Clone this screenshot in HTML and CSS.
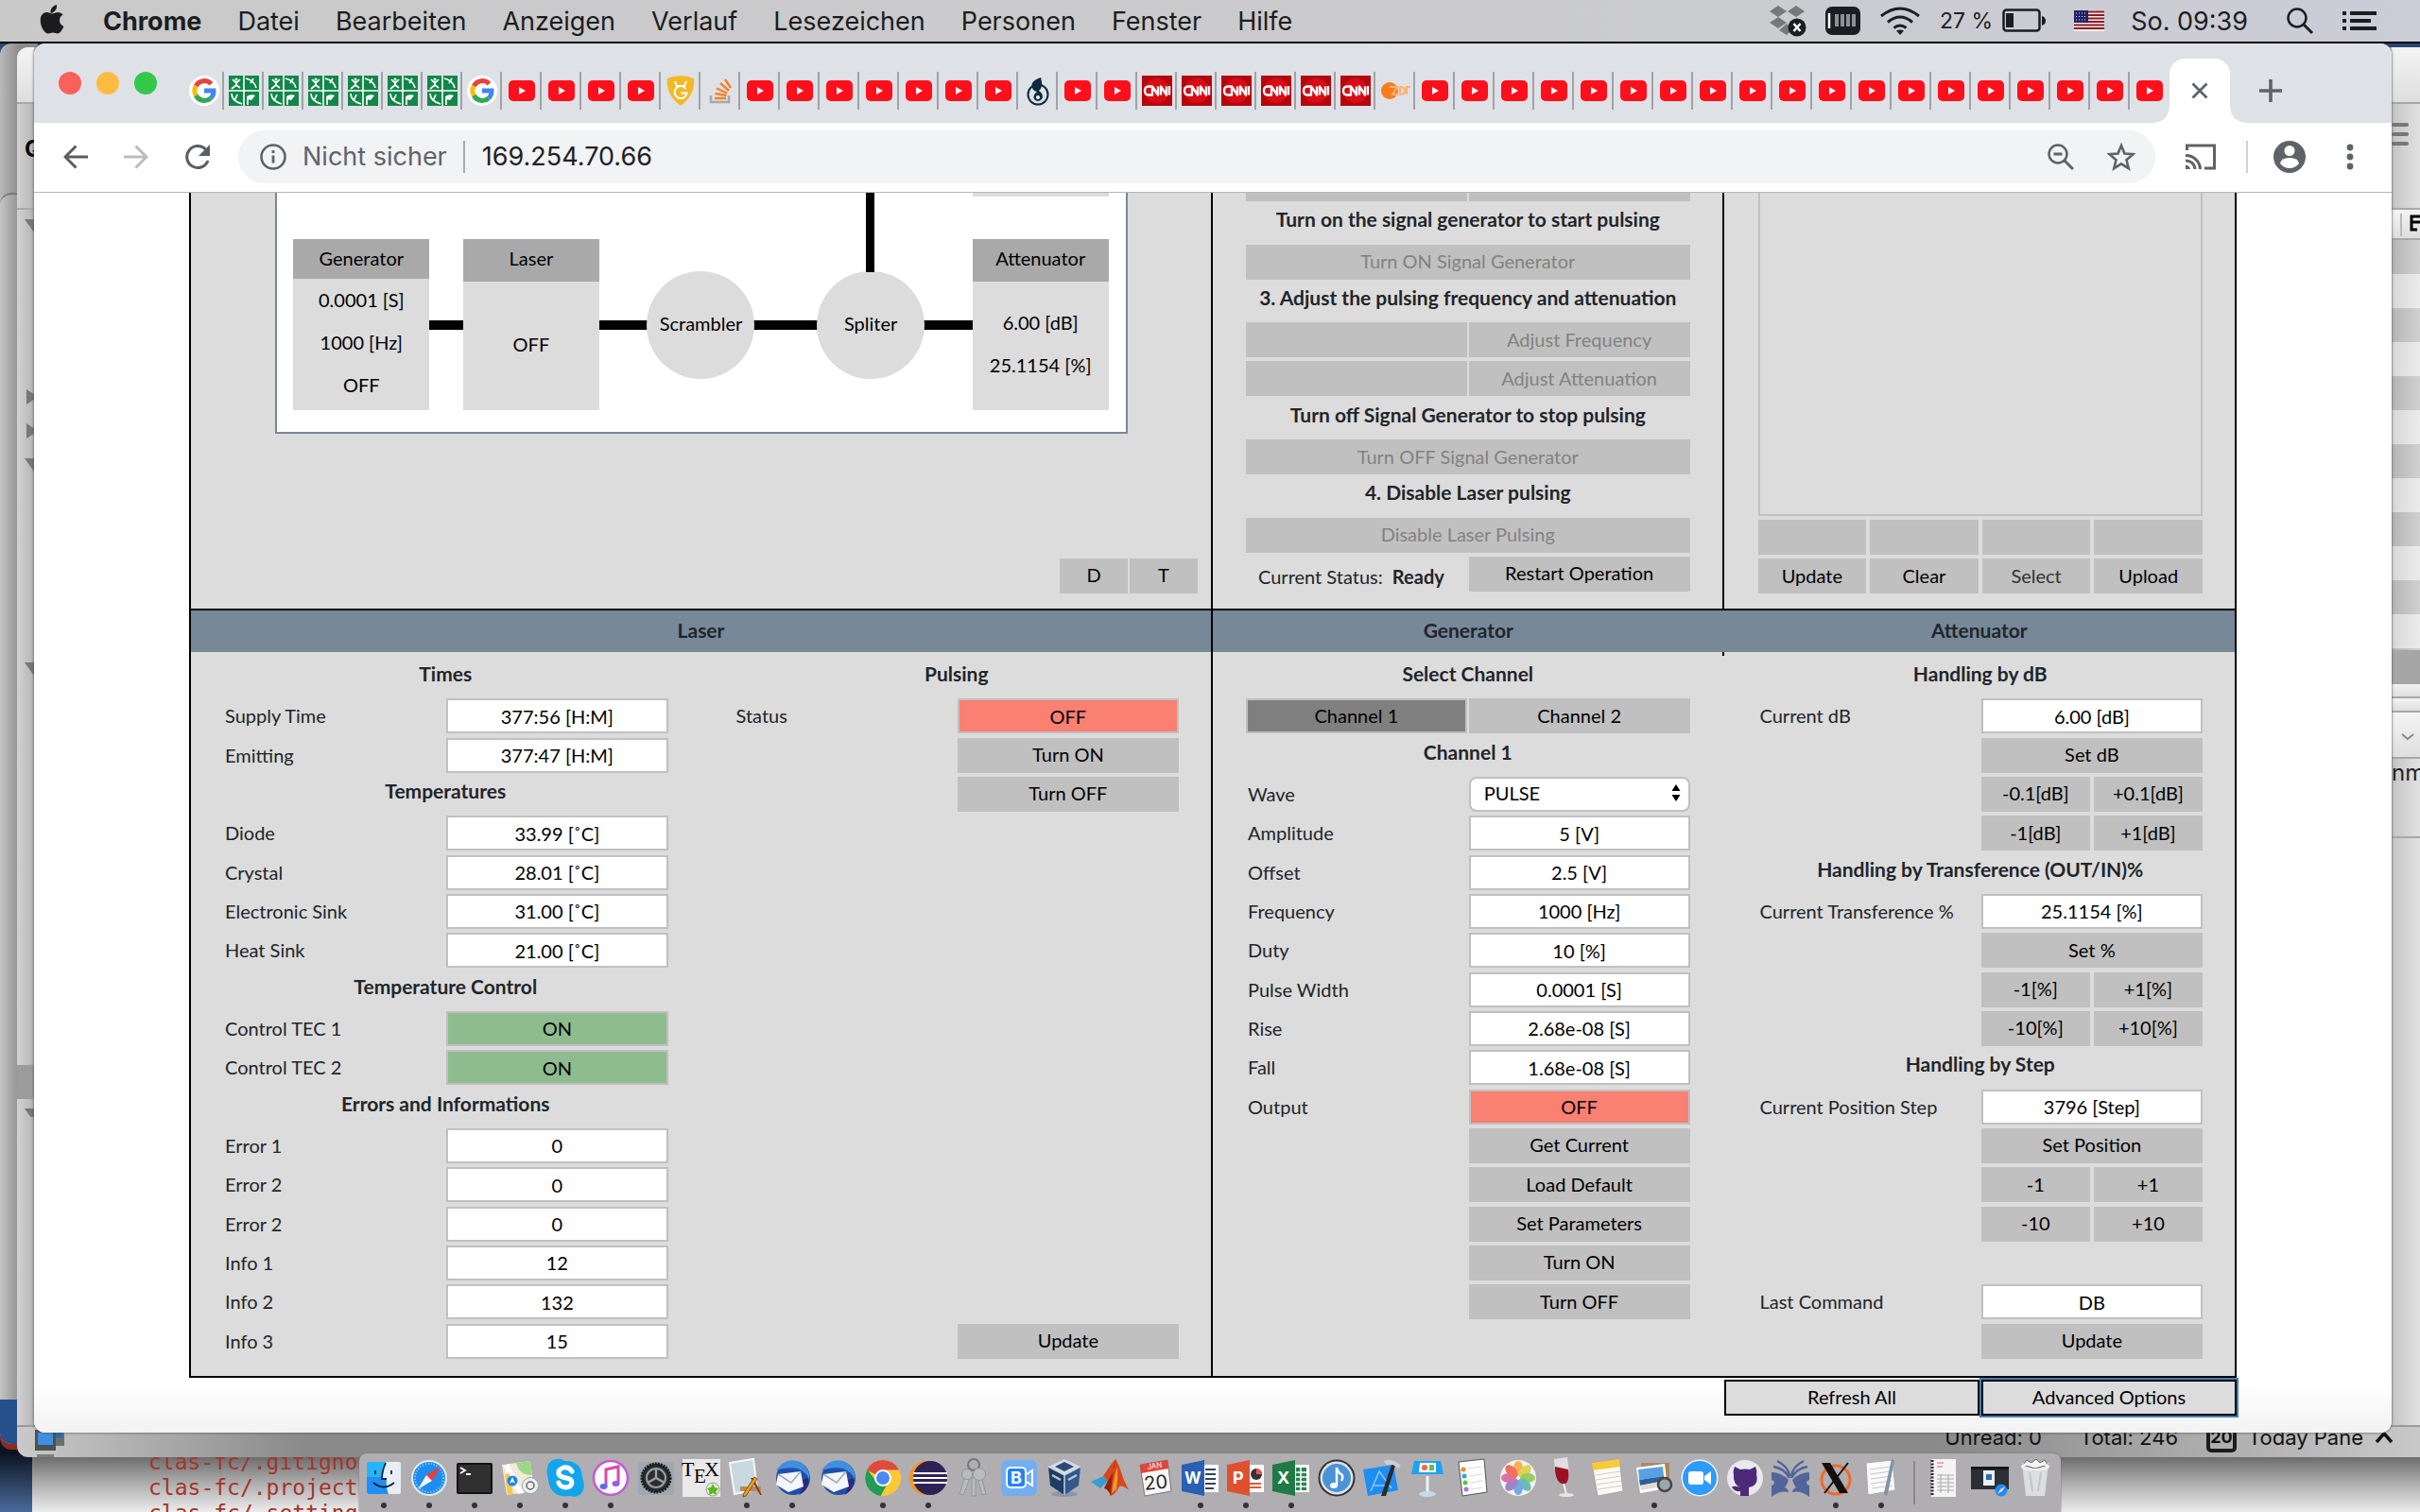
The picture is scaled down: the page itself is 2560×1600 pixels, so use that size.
FILE: index.html
```html
<!DOCTYPE html>
<html lang="de">
<head>
<meta charset="utf-8">
<title>169.254.70.66</title>
<link rel="stylesheet" href="styles.css">
</head>
<body>
<svg class="sprite" aria-hidden="true">
  <symbol id="yt" viewBox="0 0 32 32"><rect x="2" y="5" width="28" height="22" rx="5" fill="#ff0f1b"/><path d="M13 12l7 4-7 4z" fill="#fff"/></symbol>
  <symbol id="goo" viewBox="0 0 32 32"><circle cx="16" cy="16" r="16" fill="#fff"/><g fill="none" stroke-width="5"><path d="M23.500 8.800A10 10 0 0 0 7.300 11" stroke="#ea4335"/><path d="M7.300 11a10 10 0 0 0 0 10" stroke="#fbbc05"/><path d="M7.300 21a10 10 0 0 0 15.500 3" stroke="#34a853"/><path d="M22.800 24a10 10 0 0 0 3.200-8h-10" stroke="#4285f4"/></g></symbol>
  <symbol id="geo" viewBox="0 0 32 32"><path d="M0 0h32v32H0z" fill="#12864a"/><path d="M16 0v32M0 16h32" stroke="#fff" stroke-width="1.600"/><g stroke="#fff" stroke-width="1.700" fill="none"><path d="M4 4l4 4 4-4M8 6v4l-5 4M8 10l4 3M18 3q9 2 11 10M26 3l-3 5M3 19q0 8 11 11M9 20l-3 7M20 31v-8"/></g><path d="M19 22q4-3 9-1l-4 5-4-1z" fill="#fff"/><circle cx="8" cy="4" r="1.500" fill="#fff"/></symbol>
  <symbol id="gold" viewBox="0 0 32 32"><path d="M2 3q14-6 28 0 2 17-14 29Q0 20 2 3z" fill="#f2b927"/><path d="M10 6l2 5h8l2-5M21.500 14a6.500 6.500 0 1 0 1 4.500h-6" stroke="#fff" stroke-width="2" fill="none"/></symbol>
  <symbol id="so" viewBox="0 0 32 32"><path d="M6 21v7h19v-7" fill="none" stroke="#a6a9ac" stroke-width="2.600"/><path d="M10 24h12M10.500 19l12 2M12 13.500l11 5M16 8l9 8M21 4l6 9" stroke="#f48024" stroke-width="2.400"/></symbol>
  <symbol id="opo" viewBox="0 0 32 32"><circle cx="16" cy="20" r="10.500" fill="none" stroke="#0d2b40" stroke-width="2"/><path d="M19 2q-12 4-9 11 1 3 5 4-5 4-3 8 4 4 8 0 3-5-3-9 5-4 2-14z" fill="#0d2b40"/><circle cx="16" cy="23" r="2" fill="#fff"/></symbol>
  <symbol id="cnn" viewBox="0 0 32 32"><path d="M0 0h32v32H0z" fill="#b5060d"/><circle cx="16" cy="16" r="13" fill="#d90b16"/><g fill="none" stroke="#fff" stroke-width="2.400" stroke-linejoin="round"><path d="M10 11.500H7q-4 0-4 4.500t4 4.500h4v-9l6 9v-9M20 20.500v-9l6 9v-9M29 11v9.500"/></g></symbol>
  <symbol id="zdf" viewBox="0 0 32 32"><circle cx="10" cy="16" r="9" fill="#fa7d19"/><path d="M10 12h8l-5 8h6M21 12v8q5 0 5-4t-5-4M28 20v-8h4" fill="none" stroke="#ffb070" stroke-width="2.200"/></symbol>
  <symbol id="bird" viewBox="0 0 40 40"><circle cx="21" cy="20" r="18" fill="#1f4fa8"/><path d="M3 12Q14-4 30 4q10 8 8 18-2-8-12-12-12-2-23 2z" fill="#3f8fe0"/><path d="M37 20q2 12-10 18 6-8 4-16z" fill="#2b2a7c"/><path d="M5 16l24-3 3 16-16 6-13-8z" fill="#f4f6fa"/><path d="M5 16l14 9 10-12" fill="none" stroke="#9aa7bd" stroke-width="1.500"/></symbol>
</svg>

<header class="menubar">
  <svg class="apple" viewBox="0 0 26 32"><path fill="#1c1c1e" d="M18 1q.5 4-2 6.500T11.500 10Q11 6 13.500 3.500T18 1zM24.500 11.500q-3.500 2-3.500 6t4.500 6.500Q22 31.500 19 31.500c-2 0-2.800-1-5-1s-3 1-5 1C5 31.500.7 24 .7 17.500.7 12 4 9 7.500 9c2.300 0 4 1.400 5.500 1.400S17 9 19.500 9q3.300 0 5 2.500z"/></svg>
  <nav class="menus">
    <button class="app">Chrome</button><button>Datei</button><button>Bearbeiten</button><button>Anzeigen</button><button>Verlauf</button><button>Lesezeichen</button><button>Personen</button><button>Fenster</button><button>Hilfe</button>
  </nav>
  <div class="tray">
    <svg width="40" height="34" viewBox="0 0 40 34"><path fill="#77787c" d="M10 1l9 6-9 6-9-6zM29 1l9 6-9 6-9-6zM10 13l9 6-9 6-9-6zM19 20l7 6-7 6-8-5z"/><circle cx="30" cy="24" r="9.500" fill="#1c1d22"/><path d="M26.500 20l7 8M33.500 20l-7 8" stroke="#fff" stroke-width="2.500"/></svg>
    <svg width="37" height="30" viewBox="0 0 37 30"><rect width="37" height="30" rx="7" fill="#1c1d22"/><path d="M4 7v16" stroke="#fff" stroke-width="2.500"/><path d="M12 8v13M18 8v13M24 8v13M30 8v13" stroke="#8e8f94" stroke-width="4"/></svg>
    <svg width="44" height="30" viewBox="0 0 44 30"><g fill="none" stroke="#1c1d22" stroke-width="3"><path d="M2 10q20-16 40 0M9 16.500q13-11 26 0M15.500 22.500q6.500-5 13 0"/></g><path d="M18 25.500q4-2 8 0l-4 4.500z" fill="#1c1d22"/></svg>
    <span class="charge">27 %</span>
    <svg width="46" height="26" viewBox="0 0 46 26"><rect x="1.500" y="1.500" width="38" height="22" rx="3" fill="none" stroke="#1c1d22" stroke-width="2.500"/><rect x="4" y="5" width="8" height="15" fill="#1c1d22"/><path d="M42 8q4 1 4 5t-4 5z" fill="#1c1d22"/></svg>
    <svg class="flag" width="32" height="22" viewBox="0 0 32 22"><path d="M0 0h32v22H0z" fill="#f2eeee"/><path d="M0 1.500h32M0 5h32M0 8.500h32M0 12h32M0 15.500h32M0 19h32" stroke="#8e1a22" stroke-width="1.800"/><path d="M0 0h15v13H0z" fill="#1f2364"/><path d="M2 3h12M2 6.500h12M2 10h12" stroke="#dfe0f0" stroke-width="1" stroke-dasharray="1 2"/></svg>
    <span class="clock">So. 09:39</span>
    <svg class="spot" width="30" height="30" viewBox="0 0 30 30"><circle cx="12" cy="12" r="9.500" fill="none" stroke="#1c1d22" stroke-width="2.500"/><path d="M19 19l9 9" stroke="#1c1d22" stroke-width="3"/></svg>
    <svg width="36" height="22" viewBox="0 0 36 22"><path d="M0 3h4M8 3h28M0 11h4M8 11h22M0 19h4M8 19h28" stroke="#1c1d22" stroke-width="4"/></svg>
  </div>
</header>

<main class="desktop">
  <div class="back-window"></div>
  <div class="back-window lower"></div>
  <div class="terminal"><pre>clas-fc/.gitigno
clas-fc/.project
clas-fc/.setting</pre></div>
  <div class="mail">
    <div class="mail-left"><div class="band"></div><div class="band second"><span>Q</span></div>
      <svg width="18" height="960" viewBox="0 0 18 960"><g fill="#777"><path d="M8 10h20l-10 14zM10 190l12 8-12 8zM10 226l12 8-12 8zM8 263h20l-10 14zM8 479h20l-10 14zM8 951h20l-10 14z"/></g><path d="M0 905h18v36H0z" fill="#9b9b9b"/></svg>
    </div>
    <div class="mail-right"><div class="band"></div><div class="band second"><i></i><i></i><i></i></div><div class="band cols"><svg width="30" height="24" viewBox="0 0 30 24"><path d="M10 0v24" stroke="#bbb" stroke-width="2"/><path d="M30 3H21v14h6M21 9h9" fill="none" stroke="#000" stroke-width="3"/></svg></div>
      <div class="list"></div><div class="picked"></div><div class="band thin"></div><div class="band thin"></div>
      <div class="band chev"><svg width="14" height="8" viewBox="0 0 14 8"><path d="M1 1l6 5 6-5" fill="none" stroke="#888" stroke-width="2"/></svg></div><div class="band nm">nm.</div></div>
    <div class="mail-status">
      <svg class="pc" width="34" height="36" viewBox="0 0 34 36"><path d="M14 0h18v22H14z" fill="#6a706c"/><path d="M16 2h14v12H16z" fill="#2a6bb5"/><path d="M1 5h22v22H1z" fill="#4c524f"/><path d="M4 8h16v13H4z" fill="#3f8fe0"/><path d="M3 31h18v4H3z" fill="#7b827e"/></svg>
      <span class="unread">Unread: 0</span><span>Total: 246</span>
      <span class="today"><b>20</b>Today Pane<svg width="20" height="14" viewBox="0 0 20 14"><path d="M2 12l8-9 8 9" fill="none" stroke="#111" stroke-width="3.500"/></svg></span>
    </div>
  </div>

  <section class="browser">
    <div class="tabstrip">
      <div class="lights"><button aria-label="Schließen"></button><button aria-label="Minimieren"></button><button aria-label="Vergrößern"></button></div>
      <ul class="tabs">
        <li><svg><use href="#goo"/></svg></li><li><svg><use href="#geo"/></svg></li><li><svg><use href="#geo"/></svg></li><li><svg><use href="#geo"/></svg></li><li><svg><use href="#geo"/></svg></li><li><svg><use href="#geo"/></svg></li><li><svg><use href="#geo"/></svg></li><li><svg><use href="#goo"/></svg></li>
        <li><svg><use href="#yt"/></svg></li><li><svg><use href="#yt"/></svg></li><li><svg><use href="#yt"/></svg></li><li><svg><use href="#yt"/></svg></li>
        <li><svg><use href="#gold"/></svg></li><li><svg><use href="#so"/></svg></li>
        <li><svg><use href="#yt"/></svg></li><li><svg><use href="#yt"/></svg></li><li><svg><use href="#yt"/></svg></li><li><svg><use href="#yt"/></svg></li><li><svg><use href="#yt"/></svg></li><li><svg><use href="#yt"/></svg></li><li><svg><use href="#yt"/></svg></li>
        <li><svg><use href="#opo"/></svg></li><li><svg><use href="#yt"/></svg></li><li><svg><use href="#yt"/></svg></li>
        <li><svg><use href="#cnn"/></svg></li><li><svg><use href="#cnn"/></svg></li><li><svg><use href="#cnn"/></svg></li><li><svg><use href="#cnn"/></svg></li><li><svg><use href="#cnn"/></svg></li><li><svg><use href="#cnn"/></svg></li>
        <li><svg><use href="#zdf"/></svg></li>
        <li><svg><use href="#yt"/></svg></li><li><svg><use href="#yt"/></svg></li><li><svg><use href="#yt"/></svg></li><li><svg><use href="#yt"/></svg></li><li><svg><use href="#yt"/></svg></li><li><svg><use href="#yt"/></svg></li><li><svg><use href="#yt"/></svg></li><li><svg><use href="#yt"/></svg></li><li><svg><use href="#yt"/></svg></li><li><svg><use href="#yt"/></svg></li><li><svg><use href="#yt"/></svg></li><li><svg><use href="#yt"/></svg></li><li><svg><use href="#yt"/></svg></li><li><svg><use href="#yt"/></svg></li><li><svg><use href="#yt"/></svg></li><li><svg><use href="#yt"/></svg></li><li><svg><use href="#yt"/></svg></li><li><svg><use href="#yt"/></svg></li><li><svg><use href="#yt"/></svg></li>
      </ul>
      <button class="tab-active" aria-label="Tab schließen"><svg width="18" height="18" viewBox="0 0 18 18"><path d="M1.500 1.500l15 15M16.500 1.500l-15 15" stroke="#5f6368" stroke-width="2.800"/></svg></button>
      <button class="tab-new" aria-label="Neuer Tab"><svg width="24" height="24" viewBox="0 0 24 24"><path d="M12 0v24M0 12h24" stroke="#5f6368" stroke-width="3.600"/></svg></button>
    </div>
    <div class="toolbar">
      <div class="nav">
        <button aria-label="Zurück"><svg width="26" height="26" viewBox="0 0 26 26"><path d="M26 13H2M13.500 1.500L2 13l11.500 11.500" fill="none" stroke="#5a5d62" stroke-width="3"/></svg></button>
        <button aria-label="Vor"><svg width="26" height="26" viewBox="0 0 26 26"><path d="M0 13h24M12.500 1.500L24 13 12.500 24.500" fill="none" stroke="#bbbcbe" stroke-width="3"/></svg></button>
        <button aria-label="Neu laden"><svg width="28" height="28" viewBox="0 0 28 28"><path d="M22.500 6A11.500 11.500 0 1 0 25 18" fill="none" stroke="#5a5d62" stroke-width="3"/><path d="M27 1v12H15z" fill="#5a5d62"/></svg></button>
      </div>
      <div class="omnibox">
        <svg width="28" height="28" viewBox="0 0 28 28"><circle cx="14" cy="14" r="12.500" fill="none" stroke="#5f6368" stroke-width="2.600"/><path d="M14 12.500v8M14 7v3" stroke="#5f6368" stroke-width="2.800"/></svg>
        <label for="url">Nicht sicher</label>
        <input id="url" value="169.254.70.66">
        <svg width="28" height="28" viewBox="0 0 28 28"><circle cx="11" cy="11" r="9.500" fill="none" stroke="#5f6368" stroke-width="2.500"/><path d="M18 18l9 9M6.500 11h9" stroke="#5f6368" stroke-width="3"/></svg>
        <svg width="30" height="30" viewBox="0 0 30 30"><path d="M15 3l3.500 8.500 9 .7-7 6 2.200 9L15 22.400l-7.700 4.800 2.200-9-7-6 9-.7z" fill="none" stroke="#5f6368" stroke-width="2.600"/></svg>
      </div>
      <svg class="cast" width="32" height="28" viewBox="0 0 32 28"><path d="M1.500 7V2h29v24H20" fill="none" stroke="#5f6368" stroke-width="3"/><path d="M0 12.500A15 15 0 0 1 15.500 27M0 18a9.500 9.500 0 0 1 10 9" fill="none" stroke="#5f6368" stroke-width="3"/><path d="M0 22.500q4.500.5 5 4.500H0z" fill="#5f6368"/></svg>
      <svg class="person" width="34" height="34" viewBox="0 0 34 34"><circle cx="17" cy="17" r="17" fill="#5f6368"/><circle cx="17" cy="10.500" r="5.500" fill="#fff"/><path d="M7 24q1-6 10-6t10 6q-4 5-10 5T7 24z" fill="#fff"/></svg>
      <svg class="more" width="8" height="28" viewBox="0 0 8 28"><g fill="#5f6368"><circle cx="4" cy="4" r="3.400"/><circle cx="4" cy="14" r="3.400"/><circle cx="4" cy="24" r="3.400"/></g></svg>
    </div>

    <div class="page">
      <div class="upper">
        <div class="overview">
          <div class="diagram">
            <div class="nodes"><div class="box last"></div></div>
            <div class="nodes linked">
              <div class="box"><h4>Generator</h4><p>0.0001 [S]</p><p>1000 [Hz]</p><p>OFF</p></div>
              <div class="box"><h4>Laser</h4><p>OFF</p></div>
              <div class="disc">Scrambler</div>
              <div class="disc stem">Spliter</div>
              <div class="box"><h4>Attenuator</h4><p>6.00 [dB]</p><p>25.1154 [%]</p></div>
            </div>
          </div>
          <div class="dt"><button class="btn">D</button><button class="btn">T</button></div>
        </div>
        <div class="operate">
          <div class="rows">
            <div class="row"><button class="btn" disabled></button><button class="btn" disabled></button></div>
            <h3>Turn on the signal generator to start pulsing</h3>
            <button class="btn" disabled>Turn ON Signal Generator</button>
            <h3>3. Adjust the pulsing frequency and attenuation</h3>
            <div class="row"><input class="btn" aria-label="Frequency" disabled><button class="btn" disabled>Adjust Frequency</button></div>
            <div class="row"><input class="btn" aria-label="Attenuation" disabled><button class="btn" disabled>Adjust Attenuation</button></div>
            <h3>Turn off Signal Generator to stop pulsing</h3>
            <button class="btn" disabled>Turn OFF Signal Generator</button>
            <h3>4. Disable Laser pulsing</h3>
            <button class="btn" disabled>Disable Laser Pulsing</button>
            <div class="row"><p class="status">Current Status: <b>Ready</b></p><button class="btn">Restart Operation</button></div>
          </div>
        </div>
        <div class="log">
          <textarea aria-label="Log" readonly></textarea>
          <div class="quad"><button class="btn"></button><button class="btn"></button><button class="btn"></button><button class="btn"></button></div>
          <div class="quad"><button class="btn">Update</button><button class="btn">Clear</button><button class="btn soft">Select</button><button class="btn">Upload</button></div>
        </div>
      </div>

      <div class="heads"><h2 class="wide">Laser</h2><h2>Generator</h2><h2>Attenuator</h2></div>

      <div class="lower-panels">
        <div class="rows">
          <h3>Times</h3>
          <div class="row"><label for="st">Supply Time</label><input id="st" readonly value="377:56 [H:M]"></div>
          <div class="row"><label for="em">Emitting</label><input id="em" readonly value="377:47 [H:M]"></div>
          <h3>Temperatures</h3>
          <div class="row"><label for="di">Diode</label><input id="di" readonly value="33.99 [˚C]"></div>
          <div class="row"><label for="cr">Crystal</label><input id="cr" readonly value="28.01 [˚C]"></div>
          <div class="row"><label for="es">Electronic Sink</label><input id="es" readonly value="31.00 [˚C]"></div>
          <div class="row"><label for="hs">Heat Sink</label><input id="hs" readonly value="21.00 [˚C]"></div>
          <h3>Temperature Control</h3>
          <div class="row"><label for="t1">Control TEC 1</label><input id="t1" class="on" readonly value="ON"></div>
          <div class="row"><label for="t2">Control TEC 2</label><input id="t2" class="on" readonly value="ON"></div>
          <h3>Errors and Informations</h3>
          <div class="row"><label for="e1">Error 1</label><input id="e1" readonly value="0"></div>
          <div class="row"><label for="e2">Error 2</label><input id="e2" readonly value="0"></div>
          <div class="row"><label for="e3">Error 2</label><input id="e3" readonly value="0"></div>
          <div class="row"><label for="i1">Info 1</label><input id="i1" readonly value="12"></div>
          <div class="row"><label for="i2">Info 2</label><input id="i2" readonly value="132"></div>
          <div class="row"><label for="i3">Info 3</label><input id="i3" readonly value="15"></div>
        </div>
        <div class="rows">
          <h3>Pulsing</h3>
          <div class="row"><label for="ps">Status</label><input id="ps" class="off" readonly value="OFF"></div>
          <div class="row"><button class="btn solo">Turn ON</button></div>
          <div class="row"><button class="btn solo">Turn OFF</button></div>
          <div class="row last-row"><button class="btn solo">Update</button></div>
        </div>
        <div class="rows ruled">
          <h3>Select Channel</h3>
          <div class="row"><button class="btn chosen">Channel 1</button><button class="btn">Channel 2</button></div>
          <h3>Channel 1</h3>
          <div class="row"><label for="wv">Wave</label><div class="pick"><select id="wv"><option>PULSE</option></select><svg width="10" height="18" viewBox="0 0 10 18"><path d="M5 0l4.500 7h-9zM5 18l4.500-7h-9z"/></svg></div></div>
          <div class="row"><label for="am">Amplitude</label><input id="am" readonly value="5 [V]"></div>
          <div class="row"><label for="of">Offset</label><input id="of" readonly value="2.5 [V]"></div>
          <div class="row"><label for="fr">Frequency</label><input id="fr" readonly value="1000 [Hz]"></div>
          <div class="row"><label for="du">Duty</label><input id="du" readonly value="10 [%]"></div>
          <div class="row"><label for="pw">Pulse Width</label><input id="pw" readonly value="0.0001 [S]"></div>
          <div class="row"><label for="ri">Rise</label><input id="ri" readonly value="2.68e-08 [S]"></div>
          <div class="row"><label for="fa">Fall</label><input id="fa" readonly value="1.68e-08 [S]"></div>
          <div class="row"><label for="ou">Output</label><input id="ou" class="off" readonly value="OFF"></div>
          <div class="row"><button class="btn solo">Get Current</button></div>
          <div class="row"><button class="btn solo">Load Default</button></div>
          <div class="row"><button class="btn solo">Set Parameters</button></div>
          <div class="row"><button class="btn solo">Turn ON</button></div>
          <div class="row"><button class="btn solo">Turn OFF</button></div>
        </div>
        <div class="rows notch">
          <h3>Handling by dB</h3>
          <div class="row"><label for="db">Current dB</label><input id="db" readonly value="6.00 [dB]"></div>
          <div class="row"><button class="btn solo">Set dB</button></div>
          <div class="row"><div class="pair"><button class="btn">-0.1[dB]</button><button class="btn">+0.1[dB]</button></div></div>
          <div class="row"><div class="pair"><button class="btn">-1[dB]</button><button class="btn">+1[dB]</button></div></div>
          <h3>Handling by Transference (OUT/IN)%</h3>
          <div class="row"><label for="tr">Current Transference %</label><input id="tr" readonly value="25.1154 [%]"></div>
          <div class="row"><button class="btn solo">Set %</button></div>
          <div class="row"><div class="pair"><button class="btn">-1[%]</button><button class="btn">+1[%]</button></div></div>
          <div class="row"><div class="pair"><button class="btn">-10[%]</button><button class="btn">+10[%]</button></div></div>
          <h3>Handling by Step</h3>
          <div class="row"><label for="sp">Current Position Step</label><input id="sp" readonly value="3796 [Step]"></div>
          <div class="row"><button class="btn solo">Set Position</button></div>
          <div class="row"><div class="pair"><button class="btn">-1</button><button class="btn">+1</button></div></div>
          <div class="row"><div class="pair"><button class="btn">-10</button><button class="btn">+10</button></div></div>
          <div class="row"></div>
          <div class="row"><label for="lc">Last Command</label><input id="lc" readonly value="DB"></div>
          <div class="row"><button class="btn solo">Update</button></div>
        </div>
      </div>
      <div class="foot"><button>Refresh All</button><button class="focused">Advanced Options</button></div>
    </div>
  </section>

  <ul class="dock">
    <li class="run"><svg viewBox="0 0 40 40"><rect x="2" y="3" width="36" height="34" rx="2" fill="#e9eef5"/><path d="M4 3h18q-4 8-4 18h5q-1 9 2 16H4q-2 0-2-2V5q0-2 2-2z" fill="#1e8ff5"/><path d="M4 3h18q-4 8-4 16H2V5q0-2 2-2z" fill="#25b5fb"/><path d="M11 12v4M28 12v4M9 25q11 9 22 0M22 4q-4 9-4 17h5" fill="none" stroke="#14253c" stroke-width="1.800"/></svg></li>
    <li class="run"><svg viewBox="0 0 40 40"><circle cx="20" cy="20" r="19" fill="#e8ecf0"/><circle cx="20" cy="20" r="17" fill="#1e8df0"/><circle cx="20" cy="20" r="15" fill="none" stroke="#9fd4fb" stroke-width="2" stroke-dasharray="1 2"/><path d="M32 8L17 17l6 6z" fill="#f23c34"/><path d="M8 32l9-15 6 6z" fill="#f4f4f4"/></svg></li>
    <li class="run"><svg viewBox="0 0 40 40"><rect x="1" y="4" width="38" height="33" rx="2" fill="#111"/><rect x="3" y="6" width="34" height="29" fill="#303030"/><path d="M5 9l5 3-5 3M11 16h5" fill="none" stroke="#fff" stroke-width="1.800"/></svg></li>
    <li class="run"><svg viewBox="0 0 40 40"><path d="M1 6l30-4 4 32-29 4z" fill="#f1ead6"/><path d="M16 4l15-2 2 15q-14 0-17-13z" fill="#9dd88a"/><path d="M8 5l16 31-6 1L3 8z" fill="#fff"/><path d="M4 16l5-1 4 22-6 1z" fill="#f4c84a"/><circle cx="12" cy="23" r="5.500" fill="#1585f5"/><path d="M12 19l3 7-3-2-3 2z" fill="#fff"/><circle cx="31" cy="28" r="8.500" fill="#eef0f2" stroke="#9aa"/><circle cx="31" cy="28" r="4" fill="none" stroke="#666" stroke-width="1.500"/></svg></li>
    <li class="run"><svg viewBox="0 0 40 40"><path d="M10 0q6-1 9 2 18-1 19 17 3 8 1 14-4 9-14 6Q5 42 2 22-3 3 10 0z" fill="#12a5ee"/><path d="M27 13q-3-5-9-4-6 2-5 7 2 3 8 4 6 1 6 5-1 5-7 5-6-1-7-5" fill="none" stroke="#fff" stroke-width="5" stroke-linecap="round"/></svg></li>
    <li class="run"><svg viewBox="0 0 40 40"><circle cx="20" cy="20" r="18" fill="#fbfbfd" stroke="#c658d8" stroke-width="2.500"/><path d="M15 29V11l13-3v17" fill="none" stroke="#d84aa8" stroke-width="3"/><ellipse cx="12.500" cy="29" rx="4" ry="3" fill="#5a6cf0"/><ellipse cx="25.500" cy="26" rx="4" ry="3" fill="#9a5ae8"/></svg></li>
    <li><svg viewBox="0 0 40 40"><rect x="1" y="3" width="38" height="35" rx="3" fill="#9da8b0"/><circle cx="20" cy="20" r="15" fill="#2b2d30" stroke="#1a1a1a" stroke-width="3" stroke-dasharray="2 1"/><circle cx="20" cy="20" r="10" fill="none" stroke="#9aa0a4" stroke-width="2"/><path d="M20 20V10M20 20l9 5M20 20l-9 5" stroke="#9aa0a4" stroke-width="2.500"/></svg></li>
    <li><svg viewBox="0 0 40 40"><path d="M0 0h40v40H0z" fill="#e9e9ea"/><text x="-1" y="18" font-size="22" font-family="Liberation Serif, serif">T</text><text x="12" y="25" font-size="21" font-family="Liberation Serif, serif">E</text><text x="23" y="18" font-size="22" font-family="Liberation Serif, serif">X</text><circle cx="32" cy="32" r="7" fill="#dff2cd" stroke="#999"/><path d="M32 26l2 4 4 1-2.500 3 .5 4-4-2-4 2 .5-4-2.500-3 4-1z" fill="#5bb51e"/></svg></li>
    <li class="run"><svg viewBox="0 0 40 40"><path d="M2 4l25-4 4 32-24 5z" fill="#c8d8e0" stroke="#f4f6f8" stroke-width="2"/><path d="M13 29h22v5H13z" fill="#b98a58"/><path d="M24 20l3 0 9 18-2 0z" fill="#913a22"/><path d="M28 19l3 2-12 18-3 1 1-4z" fill="#f0a01c" stroke="#745018"/></svg></li>
    <li class="run"><svg><use href="#bird"/></svg></li>
    <li><svg><use href="#bird"/></svg></li>
    <li class="run"><svg viewBox="0 0 40 40"><circle cx="20" cy="20" r="19" fill="#fcc934"/><path d="M20 20L3 11.500A19 19 0 0 1 37 11.500H20z" fill="#dd4b3e"/><path d="M3.500 11a19 19 0 0 0 14 28l8-14-10 2z" fill="#1f9d57"/><circle cx="20" cy="20" r="9" fill="#fff"/><circle cx="20" cy="20" r="7" fill="#4a89f3"/></svg></li>
    <li class="run"><svg viewBox="0 0 40 40"><circle cx="18" cy="20" r="18" fill="#f7941e"/><circle cx="22" cy="20" r="18" fill="#2c2255"/><path d="M4 15h36M4 20h36M4 25h36" stroke="#fff" stroke-width="2"/></svg></li>
    <li><svg viewBox="0 0 40 40"><circle cx="20" cy="6" r="6" fill="none" stroke="#777" stroke-width="2"/><g fill="#b9bdbd" stroke="#8a8e8e" stroke-width=".8"><path d="M11 18l-6 19 4 1 7-18zM24 20l5 18 4-1-5-18zM18 20v19l4 0V20z"/><circle cx="13" cy="16" r="5.500"/><circle cx="26" cy="16" r="6.500"/></g></svg></li>
    <li><svg viewBox="0 0 40 40"><rect x="1" y="1" width="38" height="38" rx="6" fill="#74aef2"/><rect x="7" y="9" width="20" height="21" rx="4" fill="#2584ee" stroke="#fff" stroke-width="2"/><path d="M28 16l6-4v16l-6-4" fill="none" stroke="#fff" stroke-width="2"/><text x="11" y="26" font-size="18" font-weight="700" fill="#fff" font-family="Inter, sans-serif">B</text></svg></li>
    <li><svg viewBox="0 0 40 40"><ellipse cx="20" cy="37" rx="14" ry="3" fill="#8d93a8"/><path d="M20 0l17 8-17 9L3 8z" fill="#d5dce6"/><path d="M3 8l17 9v21L5 28z" fill="#1f3c62"/><path d="M37 8l-17 9v21l15-10z" fill="#33588a"/><path d="M20 3l10 5-10 5-10-5z" fill="#2b4a75"/><path d="M3 8l17 9 17-9M20 17v21" fill="none" stroke="#c8d3e2" stroke-width="1.500"/><path d="M7 17l9 5M24 22l9-5" stroke="#b8c6da" stroke-width="2.500"/></svg></li>
    <li><svg viewBox="0 0 40 40"><path d="M0 24l13-6 5 5-8 8z" fill="#3b9bd0"/><path d="M13 18Q22 4 26 0q4 6 8 20l6 13q-6-6-10-4-4 8-9 10-3-8-7-8l4-8z" fill="#d6471b"/><path d="M26 0q-1 14-8 23l-4 8q4 0 7 8 1-22 5-39z" fill="#8d2413"/><path d="M22 36q3-20 6-28 1 12-1 24z" fill="#f79a2a"/></svg></li>
    <li><svg viewBox="0 0 40 40"><path d="M4 6l29-5 4 33-28 5z" fill="#f8f8f8" stroke="#777"/><path d="M4 6l29-5 1 9L5 15z" fill="#e0453c"/><text x="12" y="11" font-size="8" fill="#fff" font-family="Inter, sans-serif" transform="rotate(-9 12 11)">JAN</text><text x="9" y="33" font-size="20" fill="#222" font-family="Inter, sans-serif" transform="rotate(-6 9 33)">20</text></svg></li>
    <li class="run"><svg viewBox="0 0 40 40"><path d="M20 6h19v29H20z" fill="#fff"/><path d="M25 11h11M25 16h11M25 21h11M25 26h11M25 31h9" stroke="#33445c" stroke-width="1.800"/><path d="M0 6l24-5v38L0 34z" fill="#2b5fb4"/><text x="3" y="26" font-size="17" font-weight="700" fill="#fff" font-family="Inter, sans-serif">W</text></svg></li>
    <li class="run"><svg viewBox="0 0 40 40"><path d="M20 6h19v29H20z" fill="#fff"/><circle cx="31" cy="16" r="6" fill="#333"/><path d="M31 16v-6a6 6 0 0 1 6 6z" fill="#e55"/><path d="M24 26h12M24 30h12" stroke="#e05a3a" stroke-width="2"/><path d="M0 6l24-5v38L0 34z" fill="#e0502f"/><text x="6" y="26" font-size="18" font-weight="700" fill="#fff" font-family="Inter, sans-serif">P</text></svg></li>
    <li class="run"><svg viewBox="0 0 40 40"><path d="M20 6h19v29H20z" fill="#fff"/><path d="M25 9h11v24H25z" fill="#2a8450"/><path d="M25 14h12M25 19h12M25 24h12M25 29h12M30 8v26" stroke="#fff" stroke-width="1.500"/><path d="M0 6l24-5v38L0 34z" fill="#1f7a45"/><text x="5" y="26" font-size="18" font-weight="700" fill="#fff" font-family="Inter, sans-serif">X</text></svg></li>
    <li><svg viewBox="0 0 40 40"><circle cx="20" cy="20" r="19.500" fill="#333"/><circle cx="20" cy="20" r="17.500" fill="#dfe3e8"/><circle cx="20" cy="20" r="15" fill="#4b93d6"/><path d="M20 28V9q1 5 6 8 1 3-1 6" fill="none" stroke="#fff" stroke-width="2.500"/><ellipse cx="17" cy="28" rx="4" ry="3" fill="#fff"/></svg></li>
    <li><svg viewBox="0 0 40 40"><path d="M0 11l32-5 5 27-32 6z" fill="#1d8df2"/><path d="M8 34l9-21 13 18M10 28h18" fill="none" stroke="#8cc8fb" stroke-width="1.500"/><path d="M30 6l4 1-10 32-5 0z" fill="#2a2a2c"/><path d="M22 2q8-4 18 5l-3 3-5-4-8 0z" fill="#c9ced2"/></svg></li>
    <li><svg viewBox="0 0 40 40"><path d="M6 2h28l3 14H3z" fill="#1aa3f4"/><path d="M12 4h17v10H11z" fill="#fff"/><circle cx="17" cy="9" r="3" fill="#e64"/><path d="M22 6h5v6h-5z" fill="#6b5"/><path d="M20 18v18" stroke="#eef3f6" stroke-width="3"/><ellipse cx="20" cy="37" rx="9" ry="3" fill="#c5dcea"/></svg></li>
    <li><svg viewBox="0 0 40 40"><path d="M5 3l27-3 3 35-26 4z" fill="#fdfdfd" stroke="#555"/><path d="M15 10l14-2M16 18l14-2M17 25l14-2M18 32l13-2" stroke="#ddd"/><circle cx="10" cy="11" r="2.500" fill="#f78a1d"/><circle cx="11" cy="18" r="2.500" fill="#28a3f0"/><circle cx="12" cy="25" r="2.500" fill="#58c837"/><circle cx="13" cy="32" r="2.500" fill="#b76be0"/></svg></li>
    <li><svg viewBox="0 0 40 40"><circle cx="20" cy="20" r="19" fill="#f3f3f3"/><g opacity=".85"><ellipse cx="20" cy="10" rx="5" ry="8" fill="#f7a531"/><ellipse cx="27" cy="13" rx="5" ry="8" fill="#d8ce3c" transform="rotate(45 27 13)"/><ellipse cx="30" cy="20" rx="8" ry="5" fill="#8ac64a"/><ellipse cx="27" cy="27" rx="5" ry="8" fill="#52b4a4" transform="rotate(-45 27 27)"/><ellipse cx="20" cy="30" rx="5" ry="8" fill="#5a9fdc"/><ellipse cx="13" cy="27" rx="5" ry="8" fill="#9272c4" transform="rotate(45 13 27)"/><ellipse cx="10" cy="20" rx="8" ry="5" fill="#d45c9c"/><ellipse cx="13" cy="13" rx="5" ry="8" fill="#ee5b46" transform="rotate(-45 13 13)"/></g></svg></li>
    <li><svg viewBox="0 0 40 40"><path d="M10 0l14-2 2 16q0 10-6 13-8-2-9-13z" fill="#e3dede"/><path d="M11 8l14 3q2 14-5 16-8-2-9-14z" fill="#9c1224"/><path d="M20 26l3 11" stroke="#eee" stroke-width="2"/><ellipse cx="23" cy="38" rx="8" ry="2" fill="#e6e6e0"/></svg></li>
    <li><svg viewBox="0 0 40 40"><path d="M2 4l29-4 4 34-27 5z" fill="#fdfcf4" stroke="#999" stroke-width=".8"/><path d="M2 4l29-4 1 8L3 12z" fill="#f7cb3a"/><path d="M6 17l26-4M6 22l27-4M7 27l26-4M8 32l26-4" stroke="#ccc"/></svg></li>
    <li class="run"><svg viewBox="0 0 40 40"><path d="M6 4h30v22H6z" fill="#a98a5c"/><path d="M1 9l30-4 3 26-29 5z" fill="#fff"/><path d="M3 11l26-3 1 10-26 4z" fill="#5aa0e0"/><path d="M4 22l26-4 1 5-26 5z" fill="#2d5fa0"/><path d="M5 28l26-5 1 5-26 5z" fill="#e4dccb"/><circle cx="31" cy="27" r="7" fill="#99a9a8" stroke="#444" stroke-width="2.500"/></svg></li>
    <li><svg viewBox="0 0 40 40"><circle cx="20" cy="20" r="19.500" fill="#f4f4f4"/><circle cx="20" cy="20" r="18" fill="#2d9bff"/><rect x="8" y="13" width="16" height="14" rx="3" fill="#fff"/><path d="M25 18l7-5v14l-7-5z" fill="#fff"/></svg></li>
    <li><svg viewBox="0 0 40 40"><circle cx="20" cy="20" r="19" fill="#e9e9f0"/><path d="M9 8l6 3q5-1 10 0l6-3q2 5 1 8 3 12-8 14v9h-9v-5q-7 1-9-5 5-1 9 1-8-3-7-14-1-3 1-8z" fill="#4c2a78"/></svg></li>
    <li><svg viewBox="0 0 40 40"><path d="M0 14q10 0 18 8-2 6-4 8 4 2 4 5-9-2-18 5V28q3-1 3-3t-3-3zM40 14q-10 0-18 8 2 6 4 8-4 2-4 5 9-2 18 5V28q-3-1-3-3t3-3z" fill="#51659c"/><path d="M2 8q12 2 17 12M6 2q12 6 13 16M38 8q-12 2-17 12M34 2q-12 6-13 16" fill="none" stroke="#51659c" stroke-width="2.500"/></svg></li>
    <li class="run"><svg viewBox="0 0 40 40"><circle cx="20" cy="22" r="15" fill="none" stroke="#ef6a2b" stroke-width="3"/><path d="M5 4h9l19 32h-9z" fill="#111"/><path d="M33 4L8 36" stroke="#111" stroke-width="2"/></svg></li>
    <li class="run"><svg viewBox="0 0 40 40"><path d="M4 4l28-3 3 32-29 5z" fill="#fafafa" stroke="#aaa"/><path d="M8 11l22-3M8 16l22-3M9 21l22-3M9 26l22-3M10 31l22-3" stroke="#c8c8c8"/><path d="M31 0l3 1-7 36-3 2-1-3z" fill="#7d93a8"/></svg></li>
    <li class="split"></li>
    <li><svg viewBox="0 0 40 40"><path d="M6 0h26v40H6z" fill="#f3f3f3"/><path d="M7 1v38" stroke="#222" stroke-width="3" stroke-dasharray="2 1.500"/><path d="M12 17h18M12 21h18M12 25h18M12 29h18M12 33h18M16 16v20M24 16v20" stroke="#aaa"/><path d="M12 4h7M12 8h6" stroke="#d66"/></svg></li>
    <li><svg viewBox="0 0 40 40"><path d="M0 8h40v24H0z" fill="#2c2f35"/><path d="M0 8h40v3H0z" fill="#151618"/><path d="M13 12h12v16H13z" fill="#e8eef4"/><path d="M16 16h6v6h-6z" fill="#2d6ea8"/><circle cx="32" cy="33" r="6.500" fill="#1e8df0"/><path d="M36 29l-5 3-3 5 5-3z" fill="#f4d8d8"/></svg></li>
    <li><svg viewBox="0 0 40 40"><path d="M6 4h28l-4 35H10z" fill="#dcdfe0"/><path d="M7 6l4-5 5 3 5-4 4 4 5-3 3 5-13 4z" fill="#f5f5f5" stroke="#666"/><ellipse cx="20" cy="8" rx="14" ry="3" fill="none" stroke="#f2f2f2" stroke-width="2"/><path d="M14 14l3 20M26 14l-3 20" stroke="#c2c6c8" stroke-width="2"/></svg></li>
  </ul>
</main>
</body>
</html>
```

FILE: styles.css
```css
* { box-sizing: border-box; }
body {
  margin: 0;
  height: 100vh;
  display: flex;
  flex-direction: column;
  overflow: hidden;
  font-family: "Trebuchet MS", Lato, sans-serif;
  font-size: 20px;
  color: #212529;
  background: #000;
}
button, input, select, textarea { font: inherit; color: #000; border: 0; padding: 0; margin: 0; background: none; }
h2, h3, h4, p, ul, pre { margin: 0; padding: 0; font-size: inherit; }
ul { list-style: none; }
svg { display: block; flex: none; }
.sprite { position: absolute; width: 0; height: 0; }

/* menu bar */
.menubar {
  height: 46px;
  flex: none;
  display: flex;
  align-items: center;
  padding: 0 46px 0 42px;
  border-bottom: 2px solid #000;
  background: linear-gradient(90deg, #c9c9ca, #cbcbcd 60%, #cbcdd7);
  font-family: Inter, sans-serif;
  font-size: 27px;
}
.apple { width: 26px; height: 32px; margin-bottom: 4px; }
.menus { display: flex; gap: 38px; margin-left: 41px; }
.menus button { color: #1c1c1e; }
.menus .app { font-weight: 700; }
.tray { display: flex; align-items: center; margin-left: auto; gap: 20px; color: #1c1d22; }
.charge { font-size: 23px; margin-right: -10px; }
.flag { margin: 0 8px 0 10px; }
.spot { margin: 0 10px 0 20px; }

/* desktop and the windows on it */
.desktop { flex: 1; position: relative; overflow: hidden; background: linear-gradient(#2d4670, #0c1420 96%, #4a6a9c); }
.back-window {
  position: absolute; left: 0; top: 0; bottom: 70px; width: 40px;
  background: linear-gradient(90deg, #b9b9b9, #8c8c8c 50%);
  border-radius: 12px 0 0 12px;
}
.back-window.lower { top: 158px; border-top: 2px solid #777; border-bottom: 47px solid #26508c; box-shadow: 0 6px 0 #8c2d1e; bottom: 72px; background: linear-gradient(90deg, #c4c4c4, #929292 50%); }
.terminal {
  position: absolute; left: 34px; right: 0; bottom: 0; height: 66px;
  padding: 0 0 0 123px;
  background: linear-gradient(#5a5a5a, #a8a8a8 50%, #ececec);
  font: 23px/27px "DejaVu Sans Mono", monospace;
  color: #a5342a;
}
.terminal pre { font: inherit; }
.mail {
  position: absolute; left: 18px; right: 0; top: 4px; bottom: 58px;
  display: flex; flex-wrap: wrap; justify-content: space-between;
  background: linear-gradient(90deg, #c9c9c9, #8a8a8a 12%, #8a8a8a 80%, #c8c8c8);
  border-radius: 12px 0 0 12px;
  overflow: hidden;
}
.mail-left { width: 18px; height: calc(100% - 34px); background: linear-gradient(90deg, #d2d2d2, #b4b4b4); }
.mail-right { width: 30px; height: calc(100% - 34px); background: linear-gradient(90deg, #c4c4c4, #e2e2e2); }
.band { height: 60px; border-bottom: 2px solid #a8a8a8; background: linear-gradient(#f4f4f4, #dedede); }
.mail .second { height: 112px; background: none; overflow: hidden; padding-top: 34px; }
.second span { font: 700 24px/28px Inter, sans-serif; margin-left: 8px; color: #000; }
.mail-right .second { padding-top: 20px; }
.second i { display: block; width: 18px; height: 4px; margin-bottom: 6px; background: #777; border-radius: 2px; }
.band.cols { height: 32px; padding-top: 4px; }
.list { height: 434px; background: repeating-linear-gradient(#00000014 0 36px, #ffffff55 36px 72px); }
.picked { height: 36px; background: #a6a6a6; }
.band.thin { height: 15px; }
.band.chev { height: 49px; padding: 22px 0 0 10px; }
.band.nm { height: 84px; overflow: hidden; font: 24px/30px Inter, sans-serif; color: #222; background: none; }
.mail-status {
  width: 100%; height: 34px;
  display: flex; align-items: center;
  padding: 0 28px 10px 0;
  border-top: 2px solid #9a9a9a;
  font: 22px/24px Inter, sans-serif; color: #111;
}
.pc { margin: 10px 0 0 18px; }
.unread { margin: 0 40px 0 auto; }
.today { display: flex; align-items: center; gap: 12px; margin-left: 30px; }
.today b { width: 32px; border: 4px solid #1c1c1e; border-radius: 5px; font-size: 18px; text-align: center; }

/* browser window */
.browser {
  position: absolute; left: 36px; right: 30px; top: 0; bottom: 84px;
  display: flex; flex-direction: column;
  background: #fff;
  border-radius: 12px;
  box-shadow: 0 0 3px #444;
  overflow: hidden;
}
.tabstrip { height: 84px; flex: none; display: flex; align-items: center; padding-left: 26px; background: #dee1e6; }
.lights { display: flex; gap: 16px; margin-right: 29px; }
.lights button { width: 24px; height: 24px; border-radius: 50%; background: #fc605b; }
.lights button:nth-child(2) { background: #fdbc40; }
.lights button:nth-child(3) { background: #34c84a; }
.tabs { display: flex; align-self: flex-end; height: 68px; align-items: center; }
.tabs li { width: 42px; height: 40px; display: flex; align-items: center; justify-content: center; padding-left: 1px; border-right: 2px solid #9fa3a8; }
.tabs li:last-child { border-color: transparent; }
.tabs svg { width: 32px; height: 32px; }
.tab-active { position: relative; align-self: flex-end; width: 64px; height: 68px; display: flex; align-items: center; justify-content: center; background: #fff; border-radius: 16px 16px 0 0; }
.tab-active::before, .tab-active::after { content: ""; position: absolute; bottom: 0; width: 16px; height: 16px; }
.tab-active::before { left: -16px; background: radial-gradient(circle at 0 0, transparent 15px, #fff 16px); }
.tab-active::after { right: -16px; background: radial-gradient(circle at 100% 0, transparent 15px, #fff 16px); }
.tab-new { align-self: flex-end; height: 68px; margin-left: 31px; }
.toolbar { height: 74px; flex: none; display: flex; align-items: center; padding: 0 40px 2px 31px; border-bottom: 1px solid #b4b5b7; font: 27px/34px Inter, sans-serif; }
.nav { display: flex; align-items: center; gap: 38px; margin-right: 29px; }
.omnibox { flex: 1; height: 56px; display: flex; align-items: center; padding: 0 21px 0 23px; border-radius: 28px; background: #f1f3f4; }
.omnibox label { margin: 0 18px 0 17px; padding-right: 17px; border-right: 2px solid #a9acb0; color: #5f6368; }
.omnibox input { flex: 1; color: #202124; }
.omnibox svg:last-child { margin-left: 35px; }
.cast { margin: 0 32px; }
.person { margin-right: 43px; }
.person { box-sizing: content-box; padding-left: 27px; border-left: 2px solid #cfd1d3; }

/* control page */
.page { flex: 1; min-height: 0; display: flex; flex-direction: column; padding: 0 164px 18px; background: linear-gradient(#fff 96%, #f2f2f2); }
.upper, .heads, .lower-panels { display: grid; grid-template-columns: repeat(4, 1fr); border: solid #000; border-width: 0 2px; background: #dcdcdc; }
.upper { flex: 1; min-height: 0; overflow: hidden; grid-template-rows: 100%; }
.upper > div { display: flex; flex-direction: column; justify-content: flex-end; min-height: 0; }
.overview { grid-column: span 2; padding: 0 16px 16px 14px; }
.diagram {
  flex: none; width: 902px; align-self: center;
  border: 2px solid #778899; border-top: 0;
  background: #fff;
  padding-bottom: 23px; margin-bottom: 132px;
  color: #000; text-align: center; line-height: 45px;
}
.nodes { position: relative; display: grid; grid-template-columns: repeat(5, 1fr); justify-items: center; align-items: center; height: 181px; }
.nodes + .nodes { margin-top: 45px; }
.linked::before { content: ""; position: absolute; left: 90px; right: 90px; top: 86px; height: 10px; background: #000; }
.box { position: relative; width: 144px; height: 181px; display: flex; flex-direction: column; justify-content: center; background: #dcdcdc; padding-bottom: 4px; }
.box.last { grid-column: 5; }
.box h4 { height: 45px; background: #a9a9a9; font-weight: 400; line-height: 41px; margin-bottom: auto; }
.box p:nth-last-child(-n+3):last-child { margin-bottom: auto; }
.box p { margin-top: 0; }
.disc { position: relative; width: 114px; height: 114px; border-radius: 50%; background: #dcdcdc; line-height: 110px; }
.stem::before { content: ""; position: absolute; bottom: 113px; left: 52px; width: 9px; height: 200px; background: #000; }
.dt { display: flex; justify-content: flex-end; gap: 2px; }
.dt .btn { width: 72px; padding-bottom: 4px; }
.operate, .log { margin-left: -2px; border-left: 2px solid #000; padding: 0 36px 13px 35px; }
.operate .rows { flex: none; height: 455px; padding: 0; grid-template-rows: repeat(11, 1fr); }
.log { padding: 0 34px 16px 36px; }
.log textarea { flex: none; height: 400px; resize: none; border: 2px solid #c0c0c0; margin-bottom: 4px; }
.quad { display: grid; grid-template-columns: repeat(4, 1fr); gap: 4px; }
.quad + .quad { margin-top: 4px; }

.heads { border-top-width: 2px; background: #778899; }
.heads h2 { height: 44px; line-height: 42px; margin-left: -2px; text-align: center; border-left: 2px solid transparent; }
.heads .wide { grid-column: span 2; border: 0; }
.heads h2:nth-child(2) { border-left-color: #000; }
.lower-panels { border-bottom-width: 2px; }
.rows { display: grid; grid-template-rows: repeat(18, 1fr); height: 766px; padding: 8px 36px 14px 34px; }
.ruled { margin-left: -2px; padding-left: 35px; border-left: 2px solid #000; }
.notch { margin-left: -2px; padding: 8px 34px 14px 38px; background: linear-gradient(#000, #000) 0 0 / 2px 4px no-repeat; }
.rows h3, .heads h2 { font-size: 21px; }
.rows h3 { text-align: center; line-height: 29px; white-space: nowrap; }
.row { display: grid; grid-template-columns: 1fr 1fr; column-gap: 2px; }
.row label, .status { padding-left: 2px; line-height: 37px; white-space: nowrap; }
.status { padding-left: 13px; line-height: 42px; }
.status b { margin-left: 5px; }
.row input, .btn { min-width: 0; width: 100%; height: 37px; text-align: center; }
.row input { background: #fff; border: 2px solid #c0c0c0; }
.btn, .row .btn { background: #c0c0c0; border: 0; padding-bottom: 2px; }
.btn:disabled { color: #828282; }
.btn.soft { color: #333; }
.row .on { background: #8fbc8f; }
.row .off { background: #fa8072; }
.row .chosen { background: #808080; border: 2px solid #c0c0c0; }
.solo, .pair { grid-column: 2; }
.pair { display: grid; grid-template-columns: 1fr 1fr; gap: 4px; }
.last-row { grid-row: 18; }
.pick { position: relative; height: 37px; }
.pick select { appearance: none; width: 100%; height: 37px; padding: 0 14px 2px; background: #fff; border: 2px solid #c0c0c0; border-radius: 8px; }
.pick svg { position: absolute; right: 10px; top: 8px; }
.foot { display: flex; justify-content: flex-end; gap: 2px; margin-top: 2px; }
.foot button { width: 270px; height: 38px; padding-bottom: 2px; background: #dcdcdc; border: 2px solid #000; }
.foot .focused { outline: 2px solid #3f80b5; }

/* dock */
.dock {
  position: absolute; left: 50%; bottom: 0; transform: translateX(-50%);
  display: flex; height: 62px; padding: 0 3px 0 2px;
  background: #b0aeb1;
  border-radius: 8px 8px 0 0;
  box-shadow: 0 0 2px #666;
}
.dock li { position: relative; width: 48px; padding: 6px 4px; }
.dock svg { width: 40px; height: 40px; overflow: visible; }
.dock .run::after { content: ""; position: absolute; left: 21px; bottom: 4px; width: 6px; height: 6px; border-radius: 50%; background: #333; }
.dock .split { width: 2px; padding: 0; height: 46px; margin: 8px 7px 8px 10px; background: #8a888c; }
```
